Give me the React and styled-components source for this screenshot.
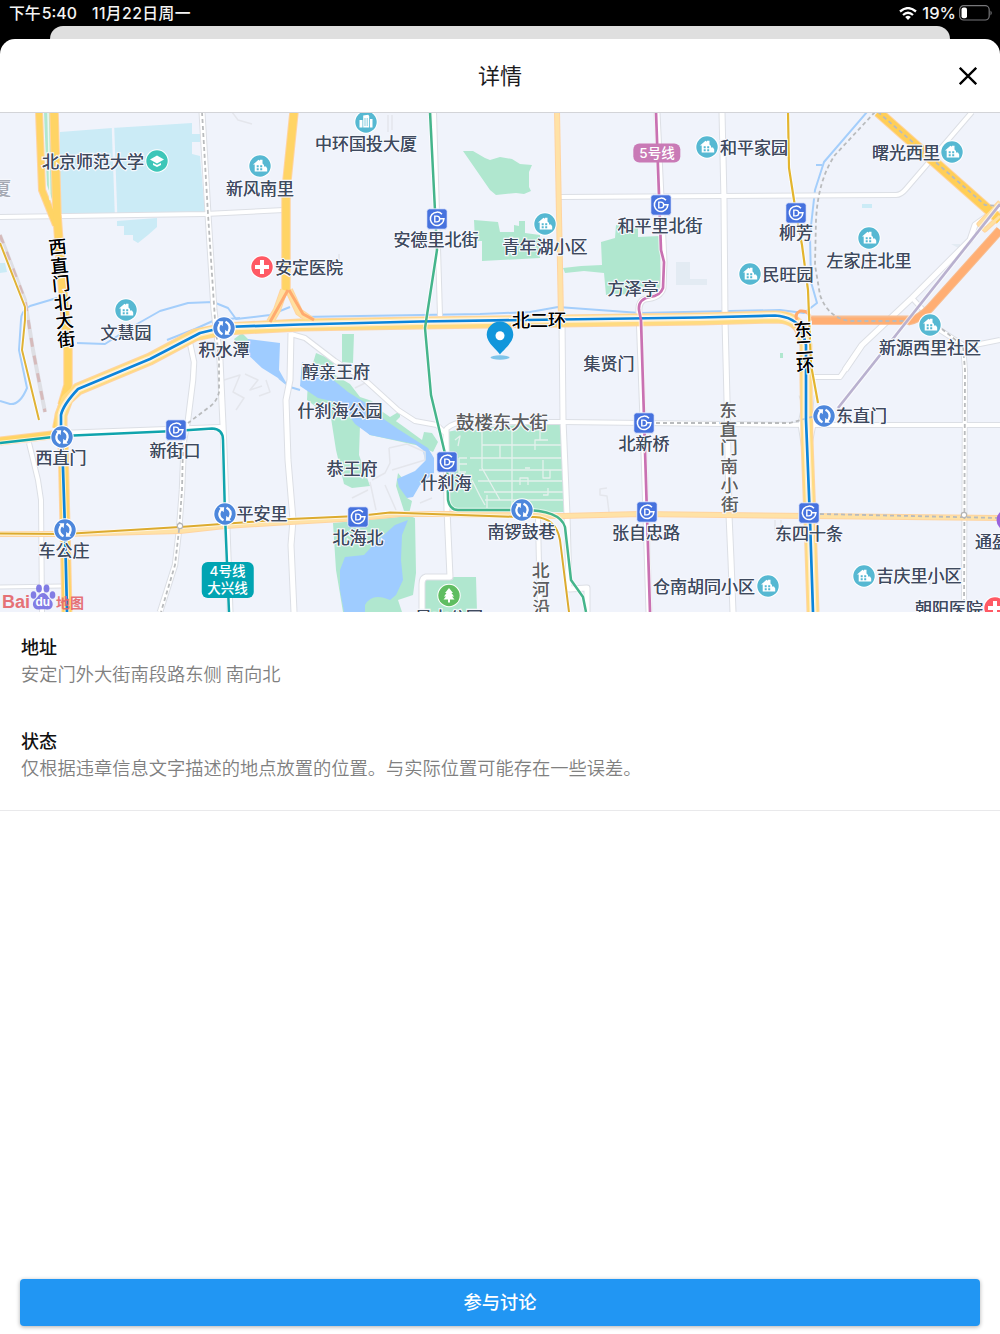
import styled, { createGlobalStyle } from "styled-components";

const GlobalStyle = createGlobalStyle`
    body{
        margin:0;
        background:#000;
        font-family: "Inter", "Noto Sans CJK SC", sans-serif;
    }
    *{
        box-sizing:border-box;
    }
`;
const Screen = styled.div`
    width:1000px;
    height:1334px;
    display:flex;
    flex-direction:column;
    overflow:hidden;
    background:#000;
`;
const StatusBar = styled.div`
    height:26px;
    flex:none;
    display:flex;
    justify-content:space-between;
    align-items:center;
    padding:0 7px 0 9px;
    color:#f4f4f4;
    font-size:16.5px;
    font-weight:500;
    line-height:26px;
    white-space:nowrap;
`;
const StatusGroup = styled.div`
    display:flex;
    align-items:center;
    gap:${props => props.$gap}px;
`;
const Clock = styled.span`
    padding-top:2px;
    font-size:15.8px;
    letter-spacing:${props => props.$tight ? 0 : .4}px;
    word-spacing:${props => props.$tight ? -3 : 0}px;
`;
const Percent = styled.span`
    margin-right:-2px;
`;
const BackSheet = styled.div`
    height:13px;
    flex:none;
    margin:0 50px;
    background:#dfdfdf;
    border-radius:13px 13px 0 0;
`;
const Sheet = styled.div`
    flex:1;
    display:flex;
    flex-direction:column;
    background:#fff;
    border-radius:15px 15px 0 0;
    overflow:hidden;
`;
const Header = styled.div`
    height:74px;
    flex:none;
    display:grid;
    grid-template-columns:60px 1fr 60px;
    align-items:center;
    border-bottom:1px solid #d3d4d8;
`;
const Title = styled.h1`
    grid-column:2;
    margin:0;
    text-align:center;
    font-size:22px;
    font-weight:400;
    line-height:32px;
    color:#1c1c1e;
`;
const CloseButton = styled.button`
    justify-self:center;
    display:flex;
    margin:0 4px 0 0;
    padding:0;
    border:0;
    background:none;
    color:#000;
`;
const MapArea = styled.div`
    position:relative;
    height:499px;
    flex:none;
    overflow:hidden;
    background:#f0f3fb;
`;
const MapCanvas = styled.svg`
    display:block;
`;
// labels and badges sit at their own spot on the map
const Pin = styled.div`
    position:absolute;
    left:${props => props.$x}px;
    top:${props => props.$y - 113}px;
    transform:translate(-50%,-50%) rotate(${props => props.$tilt || 0}deg);
`;
const Label = styled(Pin)`
    font-size:${props => props.$size || 17}px;
    line-height:22px;
    font-weight:400;
    color:${props => props.$color || "#3f4a5e"};
    white-space:nowrap;
    -webkit-text-stroke:2.5px #f5f7fc;
    paint-order:stroke fill;
    text-shadow:0 0 .6px ${props => props.$color || "#3f4a5e"};
`;
const StreetLabel = styled(Label)`
    width:20px;
    line-height:${props => props.$step}px;
    white-space:normal;
    word-break:break-all;
    text-align:center;
`;
const LineBadge = styled(Pin)`
    padding:${props => props.$pad};
    border-radius:6px;
    background:${props => props.$bg};
    color:#fff;
    font-size:13.5px;
    font-weight:500;
    line-height:17px;
    text-align:center;
    white-space:nowrap;
`;
const BaiduLogo = styled.div`
    position:absolute;
    left:2px;
    bottom:0;
    display:flex;
    align-items:flex-end;
    color:#e5676c;
    font-weight:700;
    line-height:19px;
    opacity:.92;
`;
const BaiduText = styled.span`
    font-family:${props => props.$cjk ? "\"Noto Sans CJK SC\"" : "\"Liberation Sans\""}, sans-serif;
    font-size:${props => props.$cjk ? 14 : 18}px;
`;
const Details = styled.div`
    display:flex;
    flex-direction:column;
    gap:40px;
    height:199px;
    flex:none;
    padding:21px 21px 0;
    border-bottom:1px solid #e9e9eb;
    font-size:18.25px;
    font-family:"Noto Sans CJK SC", sans-serif;
`;
const DetailTitle = styled.h2`
    margin:0;
    font-size:18px;
    line-height:27px;
    font-weight:500;
    color:#111;
`;
const DetailText = styled.p`
    margin:0;
    line-height:27px;
    font-weight:350;
    color:#808080;
    white-space:nowrap;
`;
const Footer = styled.div`
    margin-top:auto;
    padding:0 20px 8px;
`;
const DiscussButton = styled.button`
    display:block;
    width:100%;
    height:47px;
    padding:0 0 3px;
    border:0;
    border-radius:4px;
    background:#2196f3;
    box-shadow:0 1px 4px rgba(0,0,0,.32);
    color:#fff;
    font-family:"Noto Sans CJK SC", sans-serif;
    font-size:18.25px;
    font-weight:500;
`;

const GREEN = "#b0e7cf";
const WATER = "#9fccff";
const CAMPUS = "#cbebf6";

const areas = [
    [CAMPUS, "M60 132L112 128L192 123V134H200V142H192V154L200 156L205 212L60 214Z"],
    [CAMPUS, "M117 221L157 218V227L148 235L138 243L133 240V235H124V226H117Z"],
    [CAMPUS, "M0 263H5L7 272L0 273ZM862 204H872V208H862Z"],
    ["#e3ebf3", "M676 262H690V279H707V285H676ZM951 244H960V249Z"],
    [GREEN, "M44 112H54L55 208L47 185Z"],
    [GREEN, "M463 151L473 151L485 158L490 160L500 157L512 159L520 164L532 165L529 172V187L531 191L524 194L516 193L496 195L490 190Z"],
    [GREEN, "M474 220L498 222L500 232L514 232V225L519 226V221H525V233L540 235V258L482 261V241L475 241Z"],
    [GREEN, "M563 268L581 266L602 265L601 242L615 238L616 225L638 228V237L660 236V290L638 294L606 295L604 273L584 271L565 273Z"],
    [GREEN, "M447 432L462 429L562 422L564 512H456L448 505Z"],
    [GREEN, "M342 334H354L353 363L342 362ZM316 353L335 361L330 372L350 384L360 397L372 401L380 410L400 424L422 440L424 432L432 433L438 442L433 452L420 446L370 435L360 425L359 455L370 486L352 488L344 484L336 450L331 418L307 400L308 380Z"],
    [GREEN, "M385 420L400 411L400 417L392 425ZM234 339L242 333L251 342L240 349Z"],
    [GREEN, "M398 473L402 478L407 498L412 501L409 514H405L396 486ZM333 523L410 516L415 518L416 573L413 595L398 600L402 612H343L336 570Z"],
    [GREEN, "M423 577H476L477 612H423ZM780 353H783V358H780Z"],
    [WATER, "M248 339L280 343L279 370L288 386L278 378L262 368L245 352Z"],
    [WATER, "M302 362L326 374L348 392L364 402L385 420L398 429L420 443L428 448L434 458L434 473L420 485L413 497L407 498L399 487L397 479L415 471L425 461L423 450L415 444L370 435L355 424L340 403L318 398L300 386Z"],
    [WATER, "M345 557L364 555L378 540L395 525L408 520L402 535L401 560L403 580L396 595L390 600Q372 592 365 605V612H344L340 590V570Z"],
];

const whiteRoads = [
    ["M0 217L205 214L284 210", 4],
    ["M202 112L208 214L214 310L220 360L223 425L226 500L230 612", 5],
    ["M190 343L194 362L193 380L188 420L184 440L182 490L179 530L175 565L160 612", 4.5],
    ["M29 443L38 480L41 500L42 612", 4],
    ["M0 587L62 586", 3],
    ["M434 112L440 316", 4],
    ["M291 333L290 380L286 400L288 460L293 520L291 545L294 612", 5],
    ["M291 334L305 338L335 361L365 380L398 410L415 421L437 425L444 432Q449 424 462 422L562 422L644 423L810 425L1000 425", 4],
    ["M446 430L447 510L450 577L426 577Q422 578 422 584L422 612", 5],
    ["M562 322L563 420L567 515L569 589L587 588V612", 5],
    ["M560 197L720 196L896 195Q901 195 906 189L972 112", 4],
    ["M722 112L724 200L725 320L727 400L729 515L731 560L733 612", 5],
    ["M657 112L664 262L663 288Q660 298 645 299Q638 302 639 312L643 420L649 612", 5],
    ["M538 518L540 612", 4],
    ["M845 370L862 345L912 298L970 240L975 225L1000 207", 5],
    ["M912 298L925 312M812 377H840L862 345", 4],
    ["M932 325L963 345L965 370L964 612M965 347L1000 340", 4],
    ["M60 433L220 427L223 435", 4],
    ["M801 395L804 405L800 424L804 450M812 395L811 412L814 424L809 450", 3],
];

const palePaths = [
    "M224 380L240 375L233 392L244 398L236 410M245 374L258 380L250 390L262 386M266 380L270 392L259 396M232 112L238 120L252 124",
    "M350 380L362 376M355 388L365 383M389 448L390 463L385 473L372 480M389 448L407 444L425 452V460L392 470M370 482L376 510M352 498L368 490M385 485L396 510M420 503L432 498M607 488L600 489V495L607 496L609 512",
    "M388 115V132M392 115V130M339 254V262M775 520V530H781V520M930 571V585",
];

const alleys = [
    "M455 440L460 436L458 446M482 432V468L500 500M482 445H562M470 458H563M479 470H563M478 481H563M484 492H563M485 500H563M459 458V490M459 458H467M459 464H467M459 472H466M512 430V510M535 450V440H548M540 426V440M543 460V478H550V470H557M520 485V478H528V485M543 495H548V488M472 480L480 496L485 505M500 445V458M525 468H530M487 495V508",
];

const yellowRoads = [
    ["M557 112L561 318", 4, "#ffe2a6"],
    ["M0 534L65 534L180 531L225 526L290 522L360 518L400 514L450 514L562 516L640 514L810 516L1000 518", 4, "#ffe2a6"],
    ["M0 441L60 434", 7, "#ffd465"],
    ["M39 112L42 190L56 225", 6, "#ffd465"],
    ["M54 112L57 215L61 270L68 350L68 385L62 405", 7.5, "#ffd465"],
    ["M294 112L286 190L286 292", 7.5, "#ffd465"],
    ["M284 290L277 310L270 322M289 290L299 312L312 321", 6, "#ffe0a0"],
    ["M63 440L67 612", 9, "#ffd465"],
    ["M66 390L57 418L55 428", 4, "#ffd465"],
    ["M61 436L61 415L67 399L78 389L150 359L195 335L225 329L300 325L420 323L560 321L700 319L775 317Q795 317 801 330L806 345L806 380L807 440L810 520L813 612", 11, "#ffdb81"],
    ["M878 112L1000 220", 9, "#ffce57"],
    ["M1000 202L979 224L985 230L1000 216", 3, "#ffe0a0"],
];

const waterLines = [
    "M57 298L30 306Q21 311 21 320L19 350L27 388Q20 405 10 404L0 401",
    "M77 343L105 344L130 328L160 311L188 303L213 302L228 308L236 319L270 315L290 307",
    "M167 340L195 329L215 320L240 318",
    "M300 317L480 314L530 312L558 307L640 313L780 310L804 313L817 303L811 282L810 235L815 190L824 162L867 112M816 165H822",
    "M279 378L290 387L300 390",
];

const dashedLines = [
    "M202 112L208 214L215 320L219 360L219 392Q217 402 208 408L188 423",
    "M183 445L182 490L179 530L175 565L161 612",
    "M875 112L835 155Q818 180 816 220L815 265L820 295Q828 318 850 321L905 321",
    "M878 112L985 205L1000 206M656 423L790 423L815 416M820 514L1000 518M942 329L963 346L965 370L964 612",
];

const RING = "M61 436L61 415Q63 405 78 389L150 359L200 333L225 327L300 324.500L420 321.500L560 319.500L700 317.500L775 315.500Q795 317 802 330L806 345L806 420L810 520L813 612";

const subways = [
    ["#0c85dc", 2.7, RING],
    ["#0c85dc", 2.7, "M62 437L65 530L67 612"],
    ["#10a4ad", 2.5, "M0 443L62 436L175 431L212 428.500Q223 429 223 440L225 515L229 612"],
    ["#dcab2f", 2, "M0 533.500L65 534L180 527L290 519L358 516L390 512.500L520 517H535Q556 518 560 540L569 612"],
    ["#e3b52e", 2.2, "M788 112L789 168L796 213L802 245L808 290L811 365L818 403"],
    ["#e0b234", 2, "M0 243L25 307L25 320L22 350L39 420"],
    ["#45b58b", 2.5, "M430 112L437 250L425 328L431 395L447 462L448 500Q450 510 458 510L522 510Q560 510 565 527L571 580L583 597L586 612"],
    ["#c971b2", 2.7, "M656 112L661 250L664 262L663 288Q660 296 650 297Q638 299 639 310L641 320L650 612"],
    ["#b9b1cf", 2.7, "M1000 204L838 408"],
];

const houses = [[260, 166], [126, 310], [545, 224], [707, 147], [750, 274], [869, 238], [930, 325], [952, 152], [864, 576], [768, 586]];
const stations = [[437, 219], [661, 205], [796, 213], [176, 430], [447, 462], [358, 517], [644, 423], [647, 512], [809, 513]];
const transfers = [[224, 328], [62, 437], [65, 530], [225, 514], [522, 510], [824, 416]];

const labels = [
    ["北京师范大学", 93, 161.5], ["新风南里", 260, 189], ["中环国投大厦", 366, 144], ["安定医院", 309, 268],
    ["文慧园", 126, 333], ["积水潭", 224, 350], ["醇亲王府", 336, 372], ["什刹海公园", 340, 411],
    ["恭王府", 352, 469], ["安德里北街", 436, 240], ["青年湖小区", 545, 247], ["和平里北街", 660, 226],
    ["方泽亭", 633, 289], ["和平家园", 754, 148], ["柳芳", 796, 233], ["曙光西里", 906, 153],
    ["左家庄北里", 869, 261], ["民旺园", 788, 275], ["新源西里社区", 930, 348], ["集贤门", 609, 364],
    ["西直门", 61, 458], ["新街口", 175, 451], ["平安里", 262, 514], ["北海北", 358, 538],
    ["什刹海", 446, 482.5], ["南锣鼓巷", 521.500, 532], ["车公庄", 64, 551], ["北新桥", 644, 444],
    ["张自忠路", 646, 533], ["东直门", 861.500, 416], ["东四十条", 809, 534], ["仓南胡同小区", 704, 587],
    ["吉庆里小区", 919, 576], ["朝阳医院", 949, 608.5], ["通盈", 992, 542], ["景山公园", 449, 617.5],
];

function House({x, y}){
    return (
        <g transform={`translate(${x} ${y})`}>
            <circle r="11.700" fill="#fff"/>
            <circle r="10.700" fill="#56b8d2"/>
            <path d="M-7 -1.500L-1.500 -6.200L0 -5.200V-6.200H2.500V-2.500L4 -1V.5H6L7.200 2.500V5.500H-5.300V-1.500Z" fill="#fff"/>
            <path d="M-3.300 -.8h2v2h-2zM.2 -.8h2v2h-2zM-3.300 2.200h2v2h-2zM.2 2.200h2v2h-2z" fill="#56b8d2"/>
        </g>
    );
}

function Station({x, y}){
    return (
        <g transform={`translate(${x} ${y})`} fill="none" stroke="#fff">
            <rect x="-10.200" y="-10.200" width="20.400" height="20.400" rx="2.800" fill="#4672de" stroke="#f7f9ff" strokeWidth=".8"/>
            <path d="M5 -4.700A6.700 6.700 0 1 0 6.200 2.500L6.900 -.3H2.800" strokeWidth="1.500"/>
            <path d="M-2.200 -2.900H-.2A2.900 2.900 0 0 1 -.2 2.900H-2.200Z" strokeWidth="1.400"/>
        </g>
    );
}

function Transfer({x, y}){
    return (
        <g transform={`translate(${x} ${y})`}>
            <circle r="11.700" fill="#fff"/>
            <circle r="10.700" fill="#4d87dc"/>
            <path d="M-1.500 6.200Q-6 4 -5.600 -.5Q-5.300 -3.500 -3 -5M1.500 -6.200Q6 -4 5.600 .5Q5.300 3.500 3 5" fill="none" stroke="#fff" strokeWidth="2.300"/>
            <path d="M-6 -6.700L-.8 -6.700L-1.400 -1.800ZM6 6.700L.8 6.700L1.400 1.800Z" fill="#fff"/>
        </g>
    );
}

function Hospital({x, y}){
    return (
        <g transform={`translate(${x} ${y})`}>
            <circle r="11.700" fill="#fff"/>
            <circle r="10.700" fill="#ff5964"/>
            <path d="M-2 -7H2V-2H7V2H2V7H-2V2H-7V-2H-2Z" fill="#fff"/>
        </g>
    );
}

function CityMap(){
    return (
        <MapCanvas width="1000" height="499" viewBox="0 113 1000 499">
            {areas.map(([fill, d]) => <path key={d} d={d} fill={fill}/>)}
            <path d="M113 128L116 213" stroke="#f0f3fb" strokeWidth="2.500"/>
            <g fill="none" strokeLinejoin="round">
                {palePaths.map(d => <path key={d} d={d} stroke="#e4e6ec" strokeWidth="1.500"/>)}
                {alleys.map(d => <path key={d} d={d} stroke="#e4f1ed" strokeWidth="1.300"/>)}
                {waterLines.map(d => <path key={d} d={d} stroke="#a4cefb" strokeWidth="2"/>)}
                {whiteRoads.map(([d, w]) => <path key={d} d={d} stroke="#dcdfe5" strokeWidth={w + 2}/>)}
                {whiteRoads.map(([d, w]) => <path key={d} d={d} stroke="#fff" strokeWidth={w}/>)}
                <path d="M908 321Q920 319 930 308L1000 230M812 320H912" stroke="#f7bd91" strokeWidth="9"/>
                {yellowRoads.map(([d, w]) => <path key={d} d={d} stroke="#ffd4a0" strokeWidth={w + 2}/>)}
                {yellowRoads.map(([d, w, color]) => <path key={d} d={d} stroke={color} strokeWidth={w}/>)}
                <path d={RING} stroke="#ffedc8" strokeWidth="7"/>
                <path d="M797 320Q794 314 800 311Q809 310 811 319L822 321M288 290L270 322M289 290L303 314L314 320" stroke="#ffab70" strokeWidth="3"/>
                <path d="M812 321H908Q920 319 930 308L1000 230" stroke="#ffae73" strokeWidth="7"/>
                <path d="M48 112L50 200" stroke="#eaf8f2" strokeWidth="1.500"/>
                <path d="M0 235L25 300L33 350L45 412" stroke="#dedfe4" strokeWidth="4"/>
                <path d="M0 235L25 300L33 350L45 412" stroke="#d6babb" strokeWidth="3" strokeDasharray="9 9"/>
                {dashedLines.map(d => <path key={d} d={d} stroke="#b9bbbd" strokeWidth="1.800" strokeDasharray="4 3"/>)}
                {subways.map(([color, w, d]) => <path key={d} d={d} stroke="#fff" strokeOpacity=".65" strokeWidth={w + 2}/>)}
                {subways.map(([color, w, d]) => <path key={d} d={d} stroke={color} strokeWidth={w}/>)}
            </g>
            <g fill="#fff" stroke="#b5b5b5" strokeWidth="1.200">
                <circle cx="180" cy="526" r="2.700"/>
                <circle cx="964" cy="515" r="2.700"/>
            </g>
            {houses.map(([x, y]) => <House key={x} x={x} y={y}/>)}
            {stations.map(([x, y]) => <Station key={x} x={x} y={y}/>)}
            {transfers.map(([x, y]) => <Transfer key={x} x={x} y={y}/>)}
            <Hospital x={262} y={267}/>
            <Hospital x={995} y={608}/>
            <circle cx="1007" cy="520" r="10.500" fill="#9a63dc"/>
            <g transform="translate(366 122)">
                <circle r="11.700" fill="#fff"/>
                <circle r="10.700" fill="#56b8d2"/>
                <path d="M-6.500 5.500V-2H-3.500V5.500ZM-2.800 5.500V-6.500L2.200 -7.200L3.200 -6V5.500ZM4 5.500V-3H6.500V5.500Z" fill="#fff"/>
                <path d="M-1 -4V4M1.200 -4V4" stroke="#56b8d2" strokeWidth=".7"/>
            </g>
            <g transform="translate(157 161)">
                <circle r="11.700" fill="#fff"/>
                <circle r="10.700" fill="#3dc6b8"/>
                <path d="M0 -5.500L7 -1.500L0 2.500L-7 -1.500ZM-4 2L0 4L4 2V4L0 6L-4 4Z" fill="#fff"/>
            </g>
            <g transform="translate(449 595.500)">
                <circle r="11.700" fill="#fff"/>
                <circle r="10.700" fill="#5fbd61"/>
                <path d="M0 -7.500L4 -2.500H2.500L5 1H3L5.500 4H1V7H-1V4H-5.500L-3 1H-5L-2.500 -2.500H-4Z" fill="#fff"/>
            </g>
        </MapCanvas>
    );
}

function Paw(){
    return (
        <svg width="26" height="28" viewBox="0 0 26 28">
            <g fill="#7872e3">
                <ellipse cx="3.500" cy="11" rx="2.800" ry="3.800"/>
                <ellipse cx="9" cy="4.500" rx="2.900" ry="4"/>
                <ellipse cx="16.500" cy="4.500" rx="2.900" ry="4"/>
                <ellipse cx="22.500" cy="11" rx="2.800" ry="3.800"/>
                <path d="M13 9C17 9 17.500 13 20.500 15.500C24.500 19 23 26 17 25.500C14 25 12 25 9 25.500C3 26 1 19 5 15.500C8.500 13 9 9 13 9Z"/>
            </g>
            <text x="12.800" y="22" textAnchor="middle" fontFamily="Liberation Sans" fontSize="12" fontWeight="700" fill="#fff">du</text>
        </svg>
    );
}

export default function App(){
    return (
    <>
        <GlobalStyle/>
        <Screen>
            <StatusBar>
                <StatusGroup $gap={15}>
                    <Clock $tight>下午 5:40</Clock>
                    <Clock>11月22日周一</Clock>
                </StatusGroup>
                <StatusGroup $gap={5}>
                    <svg width="18" height="13" viewBox="0 0 18 13" fill="none" stroke="#fff" strokeWidth="2.300">
                        <path d="M1 4.500Q9 -2.300 17 4.500M4 8Q9 3.600 14 8"/>
                        <path d="M6.200 10Q9 7.500 11.800 10L9 13Z" fill="#fff" stroke="none"/>
                    </svg>
                    <Percent>19%</Percent>
                    <svg width="34" height="16" viewBox="0 0 34 16" fill="none">
                        <rect x=".7" y=".7" width="29.500" height="14.300" rx="4" stroke="#77777a" strokeWidth="1.200"/>
                        <rect x="2.500" y="2.500" width="5.500" height="10.700" rx="2" fill="#fff"/>
                        <path d="M31.500 5.500Q34 8 31.500 10.500Z" fill="#77777a"/>
                    </svg>
                </StatusGroup>
            </StatusBar>
            <BackSheet/>
            <Sheet>
                <Header>
                    <Title>详情</Title>
                    <CloseButton aria-label="关闭">
                        <svg width="18" height="18" viewBox="0 0 18 18" stroke="currentColor" strokeWidth="2.300">
                            <path d="M.8 .8L17.200 17.200M17.200 .8L.8 17.200"/>
                        </svg>
                    </CloseButton>
                </Header>
                <MapArea>
                    <CityMap/>
                    {labels.map(([text, x, y]) => <Label key={text} $x={x} $y={y}>{text}</Label>)}
                    <Label $x={2} $y={189} $size={18} $color="#a5a9b3">厦</Label>
                    <Label $x={502} $y={422} $size={18.4} $color="#5e5f61">鼓楼东大街</Label>
                    <Label $x={539} $y={321} $size={18} $color="#000">北二环</Label>
                    <StreetLabel $x={62} $y={293.5} $size={18} $step={18.6} $tilt={-5.5} $color="#000">西直门北大街</StreetLabel>
                    <StreetLabel $x={803.5} $y={347.5} $size={18} $step={18} $tilt={-4} $color="#000">东二环</StreetLabel>
                    <StreetLabel $x={729} $y={458} $size={17.5} $step={18.7} $tilt={-1} $color="#5e5f61">东直门南小街</StreetLabel>
                    <StreetLabel $x={540.5} $y={590} $size={17.5} $step={18.7} $tilt={-1} $color="#5e5f61">北河沿</StreetLabel>
                    <LineBadge $x={657} $y={152.5} $bg="#c97ab6" $pad="1px 6px">5号线</LineBadge>
                    <LineBadge $x={227.5} $y={579.5} $bg="#00a4b2" $pad="1px 6px">4号线<br/>大兴线</LineBadge>
                    <Pin $x={500} $y={342}>
                        <svg width="28" height="40" viewBox="0 0 28 40">
                            <ellipse cx="14" cy="37.500" rx="9.500" ry="2.200" fill="#7fc4e9"/>
                            <path d="M14 34.500C12 31 .7 23 .7 14.800A13.300 13.300 0 0 1 27.300 14.800C27.300 23 16 31 14 34.500Z" fill="#1296db"/>
                            <circle cx="14" cy="15.800" r="4.500" fill="#fff"/>
                        </svg>
                    </Pin>
                    <BaiduLogo>
                        <BaiduText>Bai</BaiduText>
                        <Paw/>
                        <BaiduText $cjk>地图</BaiduText>
                    </BaiduLogo>
                </MapArea>
                <Details>
                    <div>
                        <DetailTitle>地址</DetailTitle>
                        <DetailText>安定门外大街南段路东侧 南向北</DetailText>
                    </div>
                    <div>
                        <DetailTitle>状态</DetailTitle>
                        <DetailText>仅根据违章信息文字描述的地点放置的位置。与实际位置可能存在一些误差。</DetailText>
                    </div>
                </Details>
                <Footer>
                    <DiscussButton>参与讨论</DiscussButton>
                </Footer>
            </Sheet>
        </Screen>
    </>
    );
}
